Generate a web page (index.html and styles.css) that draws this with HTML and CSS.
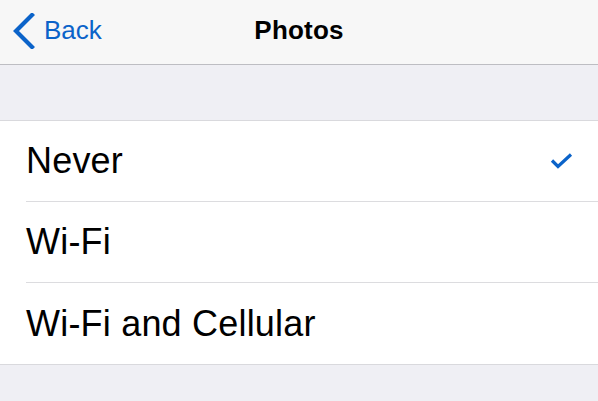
FILE: index.html
```html
<!DOCTYPE html>
<html lang="en">
<head>
  <meta charset="UTF-8" />
  <meta name="viewport" content="width=device-width, initial-scale=1.0"/>
  <title>Photos</title>
  <link rel="stylesheet" href="styles.css">
</head>
<body>
  <div class="nav-bar">
    <div class="nav-left">
      <a class="back-btn" href="#">
        <svg class="back-chevron" width="22" height="36" viewBox="0 0 22 36">
          <polyline points="19,2 3,18 19,34" fill="none" stroke="currentColor" stroke-width="4.2" stroke-linecap="square" stroke-linejoin="miter"/>
        </svg>
        <span>Back</span>
      </a>
    </div>
    <div class="nav-title">Photos</div>
    <div class="nav-right"></div>
  </div>

  <div class="group-gap"></div>

  <div class="option-list">
    <div class="option-row">
      <div class="option-inner">
        <span class="option-label">Never</span>
        <svg class="check" width="24" height="18" viewBox="0 0 24 18">
          <polyline points="2,8.5 8,14.5 21,2.5" fill="none" stroke="currentColor" stroke-width="3.2"/>
        </svg>
      </div>
    </div>
    <div class="option-row">
      <div class="option-inner">
        <span class="option-label">Wi-Fi</span>
      </div>
    </div>
    <div class="option-row">
      <div class="option-inner">
        <span class="option-label">Wi-Fi and Cellular</span>
      </div>
    </div>
  </div>
</body>
</html>
```

FILE: styles.css
```css
html, body {
  height: 100%;
  margin: 0;
  padding: 0;
}

body {
  background: #efeff4;
  font-family: 'Liberation Sans', Arial, sans-serif;
  color: #000;
  overflow: hidden;
}

.nav-bar {
  height: 65px;
  box-sizing: border-box;
  padding-bottom: 4px;
  background: #f7f7f7;
  border-bottom: 1px solid #bdbdc2;
  display: grid;
  grid-template-columns: 1fr auto 1fr;
  align-items: center;
}

.nav-left {
  display: flex;
  align-items: center;
  padding-left: 13px;
}

.back-btn {
  display: flex;
  align-items: center;
  gap: 9px;
  color: #0b63c9;
  text-decoration: none;
  font-size: 26px;
}

.back-chevron {
  display: block;
  margin-top: 1px;
}

.nav-title {
  font-size: 26px;
  font-weight: bold;
  letter-spacing: 0.2px;
}

.group-gap {
  height: 55px;
}

.option-list {
  background: #fff;
  border-top: 1px solid #d9d9dd;
  border-bottom: 1px solid #d9d9dd;
}

.option-row {
  padding-left: 26px;
}

.option-inner {
  height: 81px;
  box-sizing: border-box;
  display: flex;
  align-items: center;
  justify-content: space-between;
  padding-right: 24px;
  border-bottom: 1px solid #dcdcdf;
}

.option-row:last-child .option-inner {
  border-bottom: none;
}

.option-label {
  font-size: 36px;
  letter-spacing: 0.2px;
}

.check {
  display: block;
  color: #0b63c9;
}
```
